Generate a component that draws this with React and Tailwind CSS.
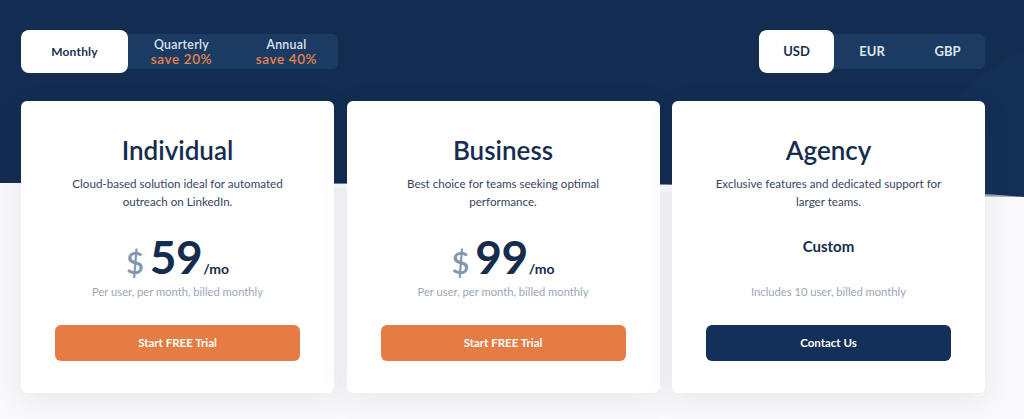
import React from "react";

const font = { fontFamily: "Lato, 'Open Sans', sans-serif" };

function Card({ title, desc, price, custom, note, cta, dark }) {
  return (
    <div className="w-[313px] rounded-[6px] bg-white px-[30px] pt-[33px] pb-[32px] text-center shadow-[0_6px_30px_rgba(20,40,80,0.08)]">
      <h2 className="text-[26px] leading-[32px] font-semibold text-[#152c4e]">{title}</h2>
      <p className="mx-auto mt-[9px] w-[240px] text-[11.6px] leading-[18px] text-[#36455e]">{desc}</p>
      <div className="flex h-[73px] flex-col items-center">
        {custom ? (
          <div className="mt-[25px] text-[15px] leading-[20px] font-bold text-[#152c4e]">Custom</div>
        ) : (
          <div className="mt-[22px] flex items-baseline justify-center leading-[48px]">
            <span className="mr-[6px] text-[31px] font-semibold text-[#8496ae]">$</span>
            <span className="text-[46px] font-bold tracking-[-0.5px] text-[#152c4e]">{price}</span>
            <span className="ml-[1px] text-[14px] font-bold text-[#152c4e]">/mo</span>
          </div>
        )}
      </div>
      <div className="text-[11.2px] leading-[16px] text-[#9ba6b6]">{note}</div>
      <button
        className={`mx-auto mt-[25px] flex h-[36px] w-[245px] items-center justify-center rounded-[6px] text-[11.5px] font-bold text-white ${
          dark ? "bg-[#13305a]" : "bg-[#e57c44]"
        }`}
      >
        {cta}
      </button>
    </div>
  );
}

export default function App() {
  return (
    <div className="relative h-[419px] w-[1024px] overflow-hidden bg-white" style={font}>
      <svg className="absolute left-0 top-0" width="1024" height="419" viewBox="0 0 1024 419">
        <path d="M0,0 H1024 V197 C930,189 760,185 600,184 L0,183 Z" fill="#132d51" />
        <circle cx="1110" cy="230" r="200" fill="#15335a" opacity="0.45" />
        <path d="M0,183 L1024,197 V419 H0 Z" fill="#f9f9fb" />
      </svg>
      <div className="relative ml-[21px] w-[964px] pt-[34px]">
        <div className="flex items-center justify-between">
          <div className="flex h-[35px] items-center rounded-[6px] bg-[#1b3b62]">
            <div className="flex h-[43px] w-[107px] items-center justify-center rounded-[8px] bg-white text-[12px] font-bold tracking-[0.2px] text-[#1c3050]">
              Monthly
            </div>
            <div className="flex w-[107px] flex-col items-center leading-[14px] font-semibold">
              <span className="text-[12.3px] tracking-[0.3px] text-[#dfe5ee]">Quarterly</span>
              <span className="text-[13.5px] tracking-[0.6px] text-[#e8834a]">save 20%</span>
            </div>
            <div className="flex w-[103px] flex-col items-center leading-[14px] font-semibold">
              <span className="text-[12.3px] tracking-[0.3px] text-[#dfe5ee]">Annual</span>
              <span className="text-[13.5px] tracking-[0.6px] text-[#e8834a]">save 40%</span>
            </div>
          </div>
          <div className="flex h-[35px] items-center rounded-[6px] bg-[#1b3b62]">
            <div className="flex h-[43px] w-[75px] items-center justify-center rounded-[8px] bg-white text-[13px] font-bold text-[#1c3050]">
              USD
            </div>
            <div className="flex w-[76px] justify-center text-[13px] font-bold text-[#dfe5ee]">EUR</div>
            <div className="flex w-[75px] justify-center text-[13px] font-bold text-[#dfe5ee]">GBP</div>
          </div>
        </div>
        <div className="mt-[32px] flex justify-between">
          <Card
            title="Individual"
            desc="Cloud-based solution ideal for automated outreach on LinkedIn."
            price="59"
            note="Per user, per month, billed monthly"
            cta="Start FREE Trial"
          />
          <Card
            title="Business"
            desc="Best choice for teams seeking optimal performance."
            price="99"
            note="Per user, per month, billed monthly"
            cta="Start FREE Trial"
          />
          <Card
            title="Agency"
            desc="Exclusive features and dedicated support for larger teams."
            custom
            note="Includes 10 user, billed monthly"
            cta="Contact Us"
            dark
          />
        </div>
      </div>
    </div>
  );
}
